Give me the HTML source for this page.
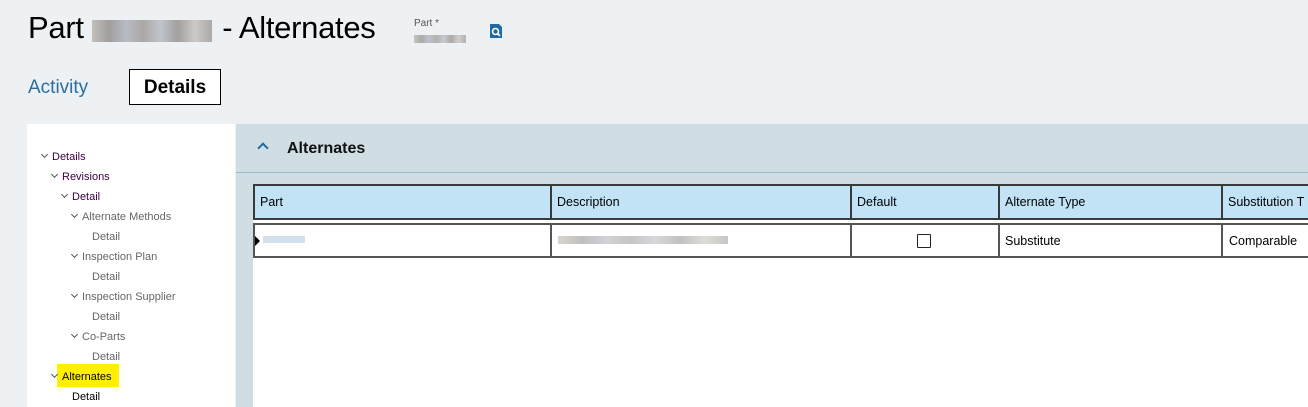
<!DOCTYPE html>
<html><head><meta charset="utf-8"><style>
*{margin:0;padding:0;box-sizing:border-box}
body{width:1308px;height:407px;overflow:hidden;background:#eef1f4;font-family:"Liberation Sans",sans-serif;position:relative;color:#000}
.abs{position:absolute}
.blur{position:absolute;background:linear-gradient(90deg,#b8b3ad,#8e8a86,#a9aeb8,#9a9691,#b4b9c2,#8f8c89,#c2c0bb,#9c9894)}
.tree div{position:absolute;font-size:11px;white-space:nowrap}
.chev{display:inline-block;width:5px;height:5px;border-right:1px solid #555;border-bottom:1px solid #555;transform:rotate(45deg);margin-right:5px;position:relative;top:-3px}
.h{position:absolute;top:184px;height:36px;background:#c2e3f5;border:2px solid #3a3a3a;font-size:12.5px;padding-left:5px;line-height:33px;white-space:nowrap;overflow:hidden}
</style></head><body>
<div class="abs" style="left:28px;top:10px;font-size:31px;letter-spacing:-0.3px">Part <span style="display:inline-block;width:122px;height:22px"></span> - Alternates</div>
<div class="blur" style="left:92px;top:20px;width:120px;height:22px;opacity:.8"></div>
<div class="abs" style="left:414px;top:18px;font-size:10px;color:#555">Part *</div>
<div class="blur" style="left:414px;top:35px;width:52px;height:8px;opacity:.7"></div>
<svg class="abs" style="left:489px;top:23px" width="14" height="16" viewBox="0 0 14 16"><path d="M1 1h9l3 3v11H1z" fill="#1f6aa5"/><circle cx="6.5" cy="8.5" r="3" fill="none" stroke="#fff" stroke-width="1.6"/><path d="M8.7 10.7l2.2 2.2" stroke="#fff" stroke-width="1.8"/></svg>
<div class="abs" style="left:28px;top:77px;font-size:19px;color:#2a6fa0">Activity</div>
<div class="abs" style="left:129px;top:69px;width:92px;height:36px;border:1px solid #000;background:#fff;font-size:19px;font-weight:bold;text-align:center;line-height:36px">Details</div>

<div class="abs" style="left:27px;top:124px;width:208px;height:283px;background:#fff"></div>
<div class="tree">
<div style="left:42px;top:151px;color:#3a0040"><span class="chev"></span>Details</div>
<div style="left:52px;top:171px;color:#3a0040"><span class="chev"></span>Revisions</div>
<div style="left:62px;top:191px;color:#3a0040"><span class="chev"></span>Detail</div>
<div style="left:72px;top:211px;color:#666"><span class="chev"></span>Alternate Methods</div>
<div style="left:92px;top:231px;color:#666">Detail</div>
<div style="left:72px;top:251px;color:#666"><span class="chev"></span>Inspection Plan</div>
<div style="left:92px;top:271px;color:#666">Detail</div>
<div style="left:72px;top:291px;color:#666"><span class="chev"></span>Inspection Supplier</div>
<div style="left:92px;top:311px;color:#666">Detail</div>
<div style="left:72px;top:331px;color:#666"><span class="chev"></span>Co-Parts</div>
<div style="left:92px;top:351px;color:#666">Detail</div>
<div style="left:57px;top:364px;width:62px;height:23px;background:#ffef00"></div>
<div style="left:52px;top:371px;color:#000"><span class="chev"></span>Alternates</div>
<div style="left:72px;top:391px;color:#000">Detail</div>
</div>

<div class="abs" style="left:236px;top:124px;width:1072px;height:283px;background:#d0dde3"></div>
<div class="abs" style="left:236px;top:172px;width:1072px;height:1px;background:#8fbfcf"></div>
<div class="abs" style="left:259px;top:144px;width:8px;height:8px;border-left:2px solid #1f6aa5;border-top:2px solid #1f6aa5;transform:rotate(45deg)"></div>
<div class="abs" style="left:287px;top:140px;font-size:16px;font-weight:bold;color:#111">Alternates</div>
<div class="abs" style="left:253px;top:184px;width:1055px;height:223px;background:#fff"></div>
<div class="h" style="left:253px;width:299px">Part</div>
<div class="h" style="left:550px;width:302px">Description</div>
<div class="h" style="left:850px;width:150px">Default</div>
<div class="h" style="left:998px;width:225px">Alternate Type</div>
<div class="h" style="left:1221px;width:100px">Substitution T</div>
<div class="abs" style="left:253px;top:223px;width:1055px;height:35px;border:2px solid #555;border-right:none;background:#fff"></div>
<div class="abs" style="left:550px;top:223px;width:2px;height:35px;background:#555"></div>
<div class="abs" style="left:850px;top:223px;width:2px;height:35px;background:#555"></div>
<div class="abs" style="left:998px;top:223px;width:2px;height:35px;background:#555"></div>
<div class="abs" style="left:1221px;top:223px;width:2px;height:35px;background:#555"></div>
<div class="abs" style="left:255px;top:236px;width:0;height:0;border-top:5px solid transparent;border-bottom:5px solid transparent;border-left:5px solid #000"></div>
<div class="blur" style="left:263px;top:236px;width:42px;height:7px;opacity:.45;background:#9db8d8"></div>
<div class="blur" style="left:558px;top:236px;width:170px;height:8px;opacity:.55"></div>
<div class="abs" style="left:917px;top:234px;width:14px;height:14px;border:1.5px solid #222;border-radius:1px"></div>
<div class="abs" style="left:1005px;top:234px;font-size:12.5px">Substitute</div>
<div class="abs" style="left:1229px;top:234px;font-size:12.5px">Comparable</div>
</body></html>
